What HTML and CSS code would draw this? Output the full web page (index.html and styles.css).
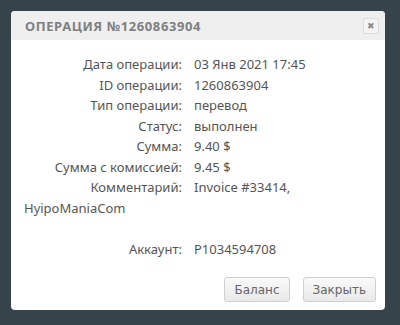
FILE: index.html
```html
<!DOCTYPE html>
<html lang="ru">
<head>
  <meta charset="UTF-8" />
  <title>Операция</title>
  <link rel="stylesheet" href="styles.css">
</head>
<body>
  <div class="modal">
    <div class="modal-head">
      <h2>ОПЕРАЦИЯ №1260863904</h2>
      <span class="close">&#x2716;</span>
    </div>
    <div class="modal-body">
      <div class="row"><span class="lbl">Дата операции:</span>03 Янв 2021 17:45</div>
      <div class="row"><span class="lbl">ID операции:</span>1260863904</div>
      <div class="row"><span class="lbl">Тип операции:</span>перевод</div>
      <div class="row"><span class="lbl">Статус:</span>выполнен</div>
      <div class="row"><span class="lbl">Сумма:</span>9.40 $</div>
      <div class="row"><span class="lbl">Сумма с комиссией:</span>9.45 $</div>
      <div class="row"><span class="lbl">Комментарий:</span>Invoice #33414,</div>
      <div class="row">HyipoManiaCom</div>
      <div class="row gap"><span class="lbl">Аккаунт:</span>P1034594708</div>
    </div>
    <div class="modal-foot">
      <button>Баланс</button>
      <button>Закрыть</button>
    </div>
  </div>
</body>
</html>
```

FILE: styles.css
```css
body {
  margin: 0;
  background: #36434b;
  font-family: "Noto Sans", sans-serif;
  height: 325px;
  overflow: hidden;
}

.modal {
  margin: 11px 0 0 11px;
  width: 374px;
  height: 299px;
  background: #fff;
  border-radius: 4px;
  box-sizing: border-box;
  display: flex;
  flex-direction: column;
}

.modal-head {
  height: 29px;
  background: #efefef;
  border-radius: 4px 4px 0 0;
  display: flex;
  align-items: center;
  justify-content: space-between;
  padding: 0 6px 0 14px;
}

.modal-head h2 {
  margin: 0;
  font-size: 13px;
  font-weight: bold;
  letter-spacing: 0.6px;
  color: #808080;
}

.close {
  width: 14px;
  height: 14px;
  border: 1px solid #dcdcdc;
  border-radius: 2px;
  background: #f4f4f4;
  color: #888;
  font-size: 9px;
  line-height: 14px;
  text-align: center;
}

.modal-body {
  padding: 14px 13px 0 13px;
  font-size: 13px;
  line-height: 20.5px;
  color: #555;
  flex: 1;
}

.lbl {
  display: inline-block;
  width: 158px;
  margin-right: 12px;
  text-align: right;
}

.gap {
  margin-top: 21px;
}

.modal-foot {
  display: flex;
  justify-content: flex-end;
  gap: 13px;
  padding: 0 9px 8px 0;
}

.modal-foot button {
  height: 25px;
  padding: 0 9px;
  border: 1px solid #cfcfcf;
  border-radius: 3px;
  background: linear-gradient(#fafafa, #e9e9e9);
  color: #666;
  font-family: "DejaVu Sans", sans-serif;
  font-size: 12px;
}
```
